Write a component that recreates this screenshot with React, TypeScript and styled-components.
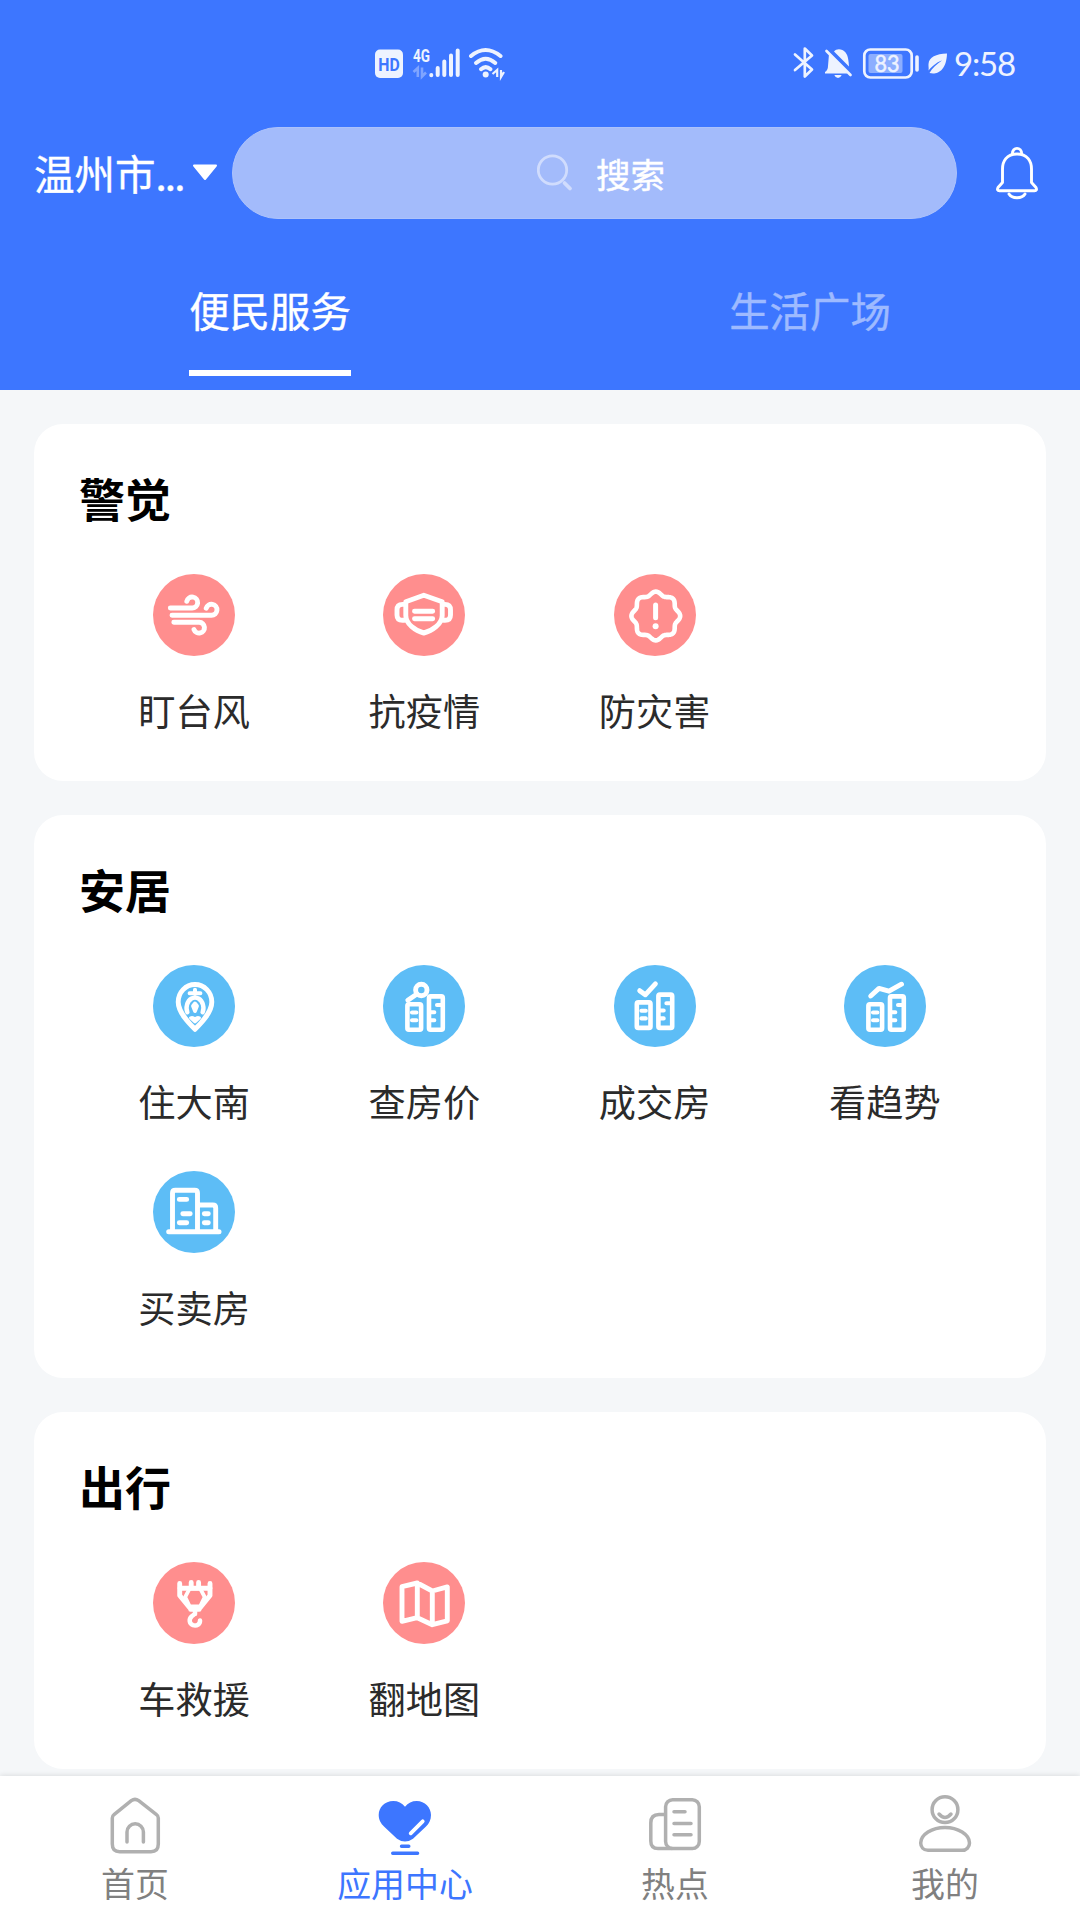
import React from 'react';
import styled, { createGlobalStyle } from 'styled-components';

const BLUE = '#3d76ff';
const CORAL = '#ff8e8e';
const SKY = '#5dbdf6';

const GlobalStyle = createGlobalStyle`
  * { box-sizing: border-box; }
  body { margin: 0; background: #f5f7f9; }
`;

const Screen = styled.div`
  width: 1080px;
  height: 1920px;
  overflow: hidden;
  display: flex;
  flex-direction: column;
  background: #f5f7f9;
  font-family: 'Noto Sans CJK SC', 'Noto Sans', sans-serif;
`;

const Header = styled.header`
  height: 390px;
  flex: none;
  display: flex;
  flex-direction: column;
  background: ${BLUE};
  color: #fff;
  -webkit-text-stroke: 0.4px currentColor;
`;

const StatusBar = styled.div`
  height: 127px;
  flex: none;
  padding: 0 64px 0 374px;
  display: flex;
  justify-content: space-between;
  align-items: flex-start;
  -webkit-text-stroke: 0;
`;

const StatusGroup = styled.div`
  height: 40px;
  margin-top: 43px;
  display: flex;
  align-items: center;
`;

const Clock = styled.span`
  width: 62px;
  margin-left: 6px;
  font: 400 33px/40px Lato, sans-serif;
  letter-spacing: -1.2px;
  color: #eef3ff;
  white-space: nowrap;
`;

const SearchRow = styled.div`
  height: 92px;
  flex: none;
  padding: 0 41px 0 34px;
  display: flex;
  align-items: center;
`;

const City = styled.div`
  width: 198px;
  display: flex;
  align-items: center;
  font-size: 40.5px;
  line-height: 60px;
  white-space: nowrap;
`;

const Dots = styled.span`
  letter-spacing: -1.9px;
`;

const Caret = styled.svg`
  margin: 0 0 2px 8px;
`;

const SearchBox = styled.div`
  width: 725px;
  height: 92px;
  border-radius: 46px;
  border: 1px solid #acc2fb;
  background: #a3bbfb;
  display: flex;
  align-items: center;
  padding-left: 304px;
  gap: 22px;
  font-size: 34.5px;
  line-height: 50px;
`;

const SearchHint = styled.span`
  padding-bottom: 1px;
`;

const BellSlot = styled.div`
  margin-left: auto;
  display: flex;
`;

const Tabs = styled.div`
  flex: 1;
  display: grid;
  grid-template-columns: 1fr 1fr;
  justify-items: center;
`;

const Tab = styled.div<{ $active?: boolean }>`
  height: 157px;
  padding-top: 61px;
  font-size: 40.4px;
  line-height: 60px;
  color: ${(p) => (p.$active ? '#fff' : '#9ebaff')};
  border-bottom: 6px solid ${(p) => (p.$active ? '#fff' : 'transparent')};
`;

const Content = styled.main`
  flex: 1;
  min-height: 0;
  overflow: hidden;
  padding: 33.75px 34px 0;
  display: flex;
  flex-direction: column;
  gap: 33.75px;
`;

const Card = styled.section`
  flex: none;
  padding: 39px 46px 0.75px 45px;
  border-radius: 29px;
  background: #fff;
`;

const Title = styled.h2`
  height: 111px;
  margin: 0;
  font-size: 46px;
  font-weight: 700;
  line-height: 68px;
  color: #000;
`;

const Grid = styled.div`
  display: grid;
  grid-template-columns: repeat(4, 1fr);
  grid-auto-rows: 206.3px;
`;

const Service = styled.div`
  display: flex;
  flex-direction: column;
  align-items: center;
`;

const Disc = styled.div<{ $tone: string }>`
  width: 82px;
  height: 82px;
  border-radius: 50%;
  background: ${(p) => p.$tone};
`;

const Label = styled.span`
  margin-top: 26px;
  font-size: 37.2px;
  line-height: 56px;
  color: #2b2b2b;
`;

const NavBar = styled.nav`
  height: 144px;
  flex: none;
  display: grid;
  grid-template-columns: repeat(4, 1fr);
  background: #fff;
  box-shadow: 0 -1px 5px rgba(0, 0, 0, 0.1);
  z-index: 1;
`;

const NavItem = styled.div<{ $active?: boolean }>`
  padding-top: 19px;
  display: flex;
  flex-direction: column;
  align-items: center;
  font-size: 33.9px;
  line-height: 50px;
  color: ${(p) => (p.$active ? BLUE : '#808080')};
`;

const NavLabel = styled.span`
  margin-top: 3px;
`;

const NavSvg = styled.svg`
  flex: none;
  fill: none;
  stroke: #b0b0b0;
  stroke-width: 3.5;
  stroke-linecap: round;
  stroke-linejoin: round;
`;

const Glyph = styled.svg`
  display: block;
  fill: none;
  stroke: #fff;
  stroke-width: 4.9;
  stroke-linecap: round;
  stroke-linejoin: round;
`;

const badgePath = (() => {
  const points: string[] = [];
  for (let i = 0; i < 144; i++) {
    const a = (i / 144) * Math.PI * 2;
    const r = 22.7 + 1.7 * Math.cos(8 * a);
    points.push(`${(41.8 + r * Math.cos(a)).toFixed(2)} ${(42 + r * Math.sin(a)).toFixed(2)}`);
  }
  return `M${points.join('L')}Z`;
})();

const Towers = () => (
  <g strokeWidth="4.6">
    <rect x="24.4" y="39.2" width="13.7" height="25.5" rx="1.5" />
    <rect x="46" y="31.4" width="13.8" height="33.3" rx="1.5" />
    <path d="M29 47.5H33.4M29 55.2H33.4M47 47.3H51.3M47 55.2H51.3M54 40H59" strokeWidth="4.1" />
  </g>
);

const glyphs: Record<string, React.ReactNode> = {
  wind: (
    <path d="M17.3 34H39A5.5 5.5 0 1 0 33.8 27.3M19 41.3H58.5A5.5 5.5 0 1 0 53.2 34.2M20.8 48.3H46.3A5.4 5.4 0 1 1 41 55.6" />
  ),
  mask: (
    <>
      <path d="M40.8 21.3L59.2 27.8V41.5C59.2 50 49 57 40.8 59C32.6 57 22.8 50 22.8 41.5V27.8Z" />
      <path d="M21.500 30.400H19.500Q14 30.400 14 36V41Q14 46.300 19.500 46.300H21.500M60.500 30.400H62Q67.500 30.400 67.500 36V41Q67.500 46.300 62 46.300H60.500" />
      <path d="M31.500 37.300H49.700M31.500 44.700H49.700" />
    </>
  ),
  alert: (
    <>
      <path d={badgePath} strokeWidth="4.6" />
      <path d="M41.600 31V43.800" strokeWidth="5" />
      <circle cx="41.600" cy="52.300" r="3" fill="#fff" stroke="none" />
    </>
  ),
  pin: (
    <>
      <path d="M42 64.300C36 58.300 25.200 47.500 25.200 37A16.800 17.500 0 0 1 58.800 37C58.800 47.500 48 58.300 42 64.300Z" />
      <path d="M36.600 28.200H47.400M42 24.800V29" strokeWidth="4" />
      <path d="M34.400 47.200C32.400 43 34 36 38.500 33.500Q42 31.800 45.500 33.500C50 36 51.600 43 49.600 47.200" strokeWidth="4.400" />
      <path d="M42 38.400L44 41L42 46L40 41Z" strokeWidth="3.800" />
      <path d="M37.600 52.800Q40 51.800 42 54.200Q44 51.800 46.400 52.800L42 57Z" strokeWidth="3" />
    </>
  ),
  price: (
    <>
      <Towers />
      <circle cx="38.300" cy="25" r="5.700" />
      <path d="M34 29L24.800 35.200" />
    </>
  ),
  deal: (
    <>
      <g transform="translate(-1.6 -1.8)"><Towers /></g>
      <path d="M25.700 25.700L31.300 29.800L41.400 18.800" />
    </>
  ),
  trend: (
    <>
      <Towers />
      <path d="M26.700 31L35 23.400L45 26.200L57.500 19.200" />
    </>
  ),
  estate: (
    <>
      <path d="M19.500 59V22Q19.500 19.200 22.300 19.200H41.700Q44.500 19.200 44.500 22V59M44.500 34H59.800Q62.700 34 62.700 36.900V59" />
      <path d="M15.700 60.700H66" strokeWidth="5" />
      <path d="M26.300 28.400H33.700M29.800 42.800H37.200M26.300 51.800H33.700M51.300 42.800H55.300M51.300 51.800H55.300" strokeWidth="4.900" />
    </>
  ),
  crane: (
    <>
      <path d="M26.700 21.500V33.500L36.500 45.500M57 21.500V33.500L47.300 45.500" />
      <path d="M27 26.300H57M38.200 20.500V25M45.600 20.500V25" />
      <path d="M36.600 26.600H47.200L51.700 35L47.200 44.400H36.600L32.200 35Z" strokeWidth="3.800" />
      <path d="M37.500 47.500H46.300M42 47V52M42 51.800L38.800 54.200C35.500 57 36.200 61.800 40 63.200C44 64.500 47.300 61.800 47 58.400" strokeWidth="4.500" />
    </>
  ),
  map: (
    <path d="M19 24.700L34.300 21L49.300 29L64.300 24.900V58.800L49.300 62.700L34.300 55.700L19 59.300ZM34.300 21V55.700M49.300 29V62.700" />
  ),
};

const sections = [
  {
    title: '警觉',
    tone: CORAL,
    items: [['wind', '盯台风'], ['mask', '抗疫情'], ['alert', '防灾害']],
  },
  {
    title: '安居',
    tone: SKY,
    items: [['pin', '住大南'], ['price', '查房价'], ['deal', '成交房'], ['trend', '看趋势'], ['estate', '买卖房']],
  },
  {
    title: '出行',
    tone: CORAL,
    items: [['crane', '车救援'], ['map', '翻地图']],
  },
];

const NetworkIcons = () => (
  <svg width="140" height="40" viewBox="374 43 140 40" fill="#eef3ff">
    <rect x="375" y="49.5" width="28" height="28.5" rx="5" />
    <text x="389" y="70.500" fontSize="18" fontWeight="700" textAnchor="middle" textLength="21.500" lengthAdjust="spacingAndGlyphs" fill={BLUE} fontFamily="Roboto, sans-serif">HD</text>
    <text x="413" y="61.800" fontSize="18.500" fontWeight="700" textLength="17" lengthAdjust="spacingAndGlyphs" fontFamily="Roboto, sans-serif">4G</text>
    <path d="M413.500 72L417.800 68V77M422 67.500V76.500L426 72.500" fill="none" stroke="#7fa4ff" strokeWidth="2.600" />
    <path d="M431.300 75V75.200M437.700 68V75M444.300 61.500V75M451 55.500V75M457.700 50.500V75" stroke="#eef3ff" strokeWidth="4" strokeLinecap="round" />
    <g fill="none" stroke="#eef3ff" strokeWidth="4" strokeLinecap="round">
      <path d="M471 56Q485.500 44 500.500 56" />
      <path d="M476 63Q485.700 54.500 495.300 63" />
      <path d="M481 69.200Q485.700 65 490.500 69.200" />
    </g>
    <circle cx="485.700" cy="74.500" r="3" />
    <path d="M492.500 74L497.200 70V77M501 70V77L504 72" fill="none" stroke="#eef3ff" strokeWidth="2.200" />
  </svg>
);

const DeviceIcons = () => (
  <svg width="156" height="40" viewBox="792 43 156 40" fill="none" stroke="#eef3ff" strokeLinecap="round" strokeLinejoin="round">
    <path d="M795 54.500L812 69.500L804.800 76.500V48.500L812 55.500L795 70" strokeWidth="2.700" />
    <path d="M829 54L847 72.500V73.500H825V72Q828 70 828 66Z" fill="#eef3ff" stroke="none" />
    <path d="M834 51.500C836.500 48.500 842 48.500 845.500 52.500C848 55.500 848.500 60 849 66.500Z" fill="#eef3ff" stroke="none" />
    <path d="M826.500 51L850.500 75" strokeWidth="2.700" />
    <path d="M834.300 75H841.700Q840.500 78 838 78Q835.500 78 834.300 75Z" fill="#eef3ff" stroke="none" />
    <rect x="864.300" y="49.500" width="47.400" height="28" rx="6" strokeWidth="2.700" />
    <rect x="868.500" y="54" width="34" height="19" rx="2" fill="#8caeff" stroke="none" />
    <path d="M917 57V70" strokeWidth="3.600" />
    <text x="887" y="71.500" fontSize="22.500" textAnchor="middle" textLength="25" lengthAdjust="spacingAndGlyphs" fill="#eef3ff" stroke="#eef3ff" strokeWidth="0.500" fontFamily="Lato, sans-serif">83</text>
    <path d="M947 53.500C936 54 929 57 928.500 64C928.300 66.500 929 68.500 928.500 70.500C934 64 938 62 942 60.500C937 64 932 68 929.500 73C937 75 946.500 71 947 53.500Z" fill="#eef3ff" stroke="none" />
  </svg>
);

const SearchIcon = () => (
  <svg width="37" height="38" viewBox="0.5 0.5 37 38" fill="none" stroke="#d0dcfd" strokeLinecap="round">
    <circle cx="16" cy="16.500" r="14.200" strokeWidth="2.800" />
    <path d="M28 29.500L33.500 35" strokeWidth="3.800" />
  </svg>
);

const BellIcon = () => (
  <svg width="44" height="54" viewBox="0 0 44 54" fill="none" stroke="#fff" strokeWidth="2.900" strokeLinejoin="round" strokeLinecap="round">
    <path d="M17.300 8C17.300 .5 26.700 .5 26.700 8" />
    <path d="M22 8C11.500 8 7.500 15.500 7.500 23V36.500L3 41.500Q1.500 44.800 4.500 44.800H39.500Q42.500 44.800 41 41.500L36.500 36.500V23C36.500 15.500 32.500 8 22 8Z" />
    <path d="M14 48C17 53 27 53 30 48" />
  </svg>
);

const HomeIcon = () => (
  <NavSvg width="60" height="60" viewBox="0 0 60 60">
    <path d="M7.300 23Q7.300 21 9 19.700L26.300 5.700Q30 3 33.700 5.700L51.500 19.700Q53.300 21 53.300 23V49Q53.300 56.700 46 56.700H14.600Q7.300 56.700 7.300 49Z" />
    <path d="M22 47V37A8.200 8.200 0 0 1 38.400 37V47" />
  </NavSvg>
);

const HeartIcon = () => (
  <NavSvg width="60" height="60" viewBox="0 0 60 60">
    <path d="M30 11.700C33 8 37 6 41.700 6C50 6 56 12.500 56 20C56 25 54 28.500 51 31.500L38 43.700Q30 49.500 22 43.700L9 31.500C6 28.500 3.700 25 3.700 20C3.700 12.500 9.500 6 18.300 6C23 6 27 8 30 11.700Z" fill={BLUE} stroke="none" />
    <path d="M47.700 26.300L35.700 38.300" stroke="#fff" strokeWidth="3.800" />
    <path d="M26.500 51.300H33.800M17.700 58.300H42.600" stroke={BLUE} strokeWidth="3.400" />
  </NavSvg>
);

const NewsIcon = () => (
  <NavSvg width="60" height="60" viewBox="0 0 60 60">
    <rect x="20.600" y="4.800" width="33.700" height="48.700" rx="7" />
    <path d="M20 19.500H14Q5.800 19.500 5.800 28V46Q5.800 53.500 13 53.500H27" />
    <path d="M29 16.700H40M29 28.400H46M29 39.800H46" />
  </NavSvg>
);

const PersonIcon = () => (
  <NavSvg width="60" height="60" viewBox="0 0 60 60">
    <circle cx="30" cy="14.700" r="12.900" />
    <path d="M24 19Q30 26 36 19" />
    <path d="M13 55.300C8.500 55.300 5.700 52 5.700 48C5.700 39.500 17 32.400 30 32.400S54.500 39.500 54.500 48C54.500 52 51.500 55.300 47 55.300Z" />
  </NavSvg>
);

const navItems = [
  { label: '首页', Icon: HomeIcon },
  { label: '应用中心', Icon: HeartIcon, active: true },
  { label: '热点', Icon: NewsIcon },
  { label: '我的', Icon: PersonIcon },
];

export default function App() {
  return (
    <Screen>
      <GlobalStyle />
      <Header>
        <StatusBar>
          <StatusGroup><NetworkIcons /></StatusGroup>
          <StatusGroup><DeviceIcons /><Clock>9:58</Clock></StatusGroup>
        </StatusBar>
        <SearchRow>
          <City>
            温州市<Dots>...</Dots>
            <Caret width="26" height="17" viewBox="0 0 26 17">
              <path d="M2 1.500H24L13 15Z" fill="#fff" stroke="#fff" strokeWidth="2" strokeLinejoin="round" />
            </Caret>
          </City>
          <SearchBox><SearchIcon /><SearchHint>搜索</SearchHint></SearchBox>
          <BellSlot><BellIcon /></BellSlot>
        </SearchRow>
        <Tabs>
          <Tab $active>便民服务</Tab>
          <Tab>生活广场</Tab>
        </Tabs>
      </Header>
      <Content>
        {sections.map((s) => (
          <Card key={s.title}>
            <Title>{s.title}</Title>
            <Grid>
              {s.items.map(([icon, label]) => (
                <Service key={label}>
                  <Disc $tone={s.tone}>
                    <Glyph width="82" height="82" viewBox="0 0 82 82">{glyphs[icon]}</Glyph>
                  </Disc>
                  <Label>{label}</Label>
                </Service>
              ))}
            </Grid>
          </Card>
        ))}
      </Content>
      <NavBar>
        {navItems.map(({ label, Icon, active }) => (
          <NavItem key={label} $active={active}>
            <Icon />
            <NavLabel>{label}</NavLabel>
          </NavItem>
        ))}
      </NavBar>
    </Screen>
  );
}
